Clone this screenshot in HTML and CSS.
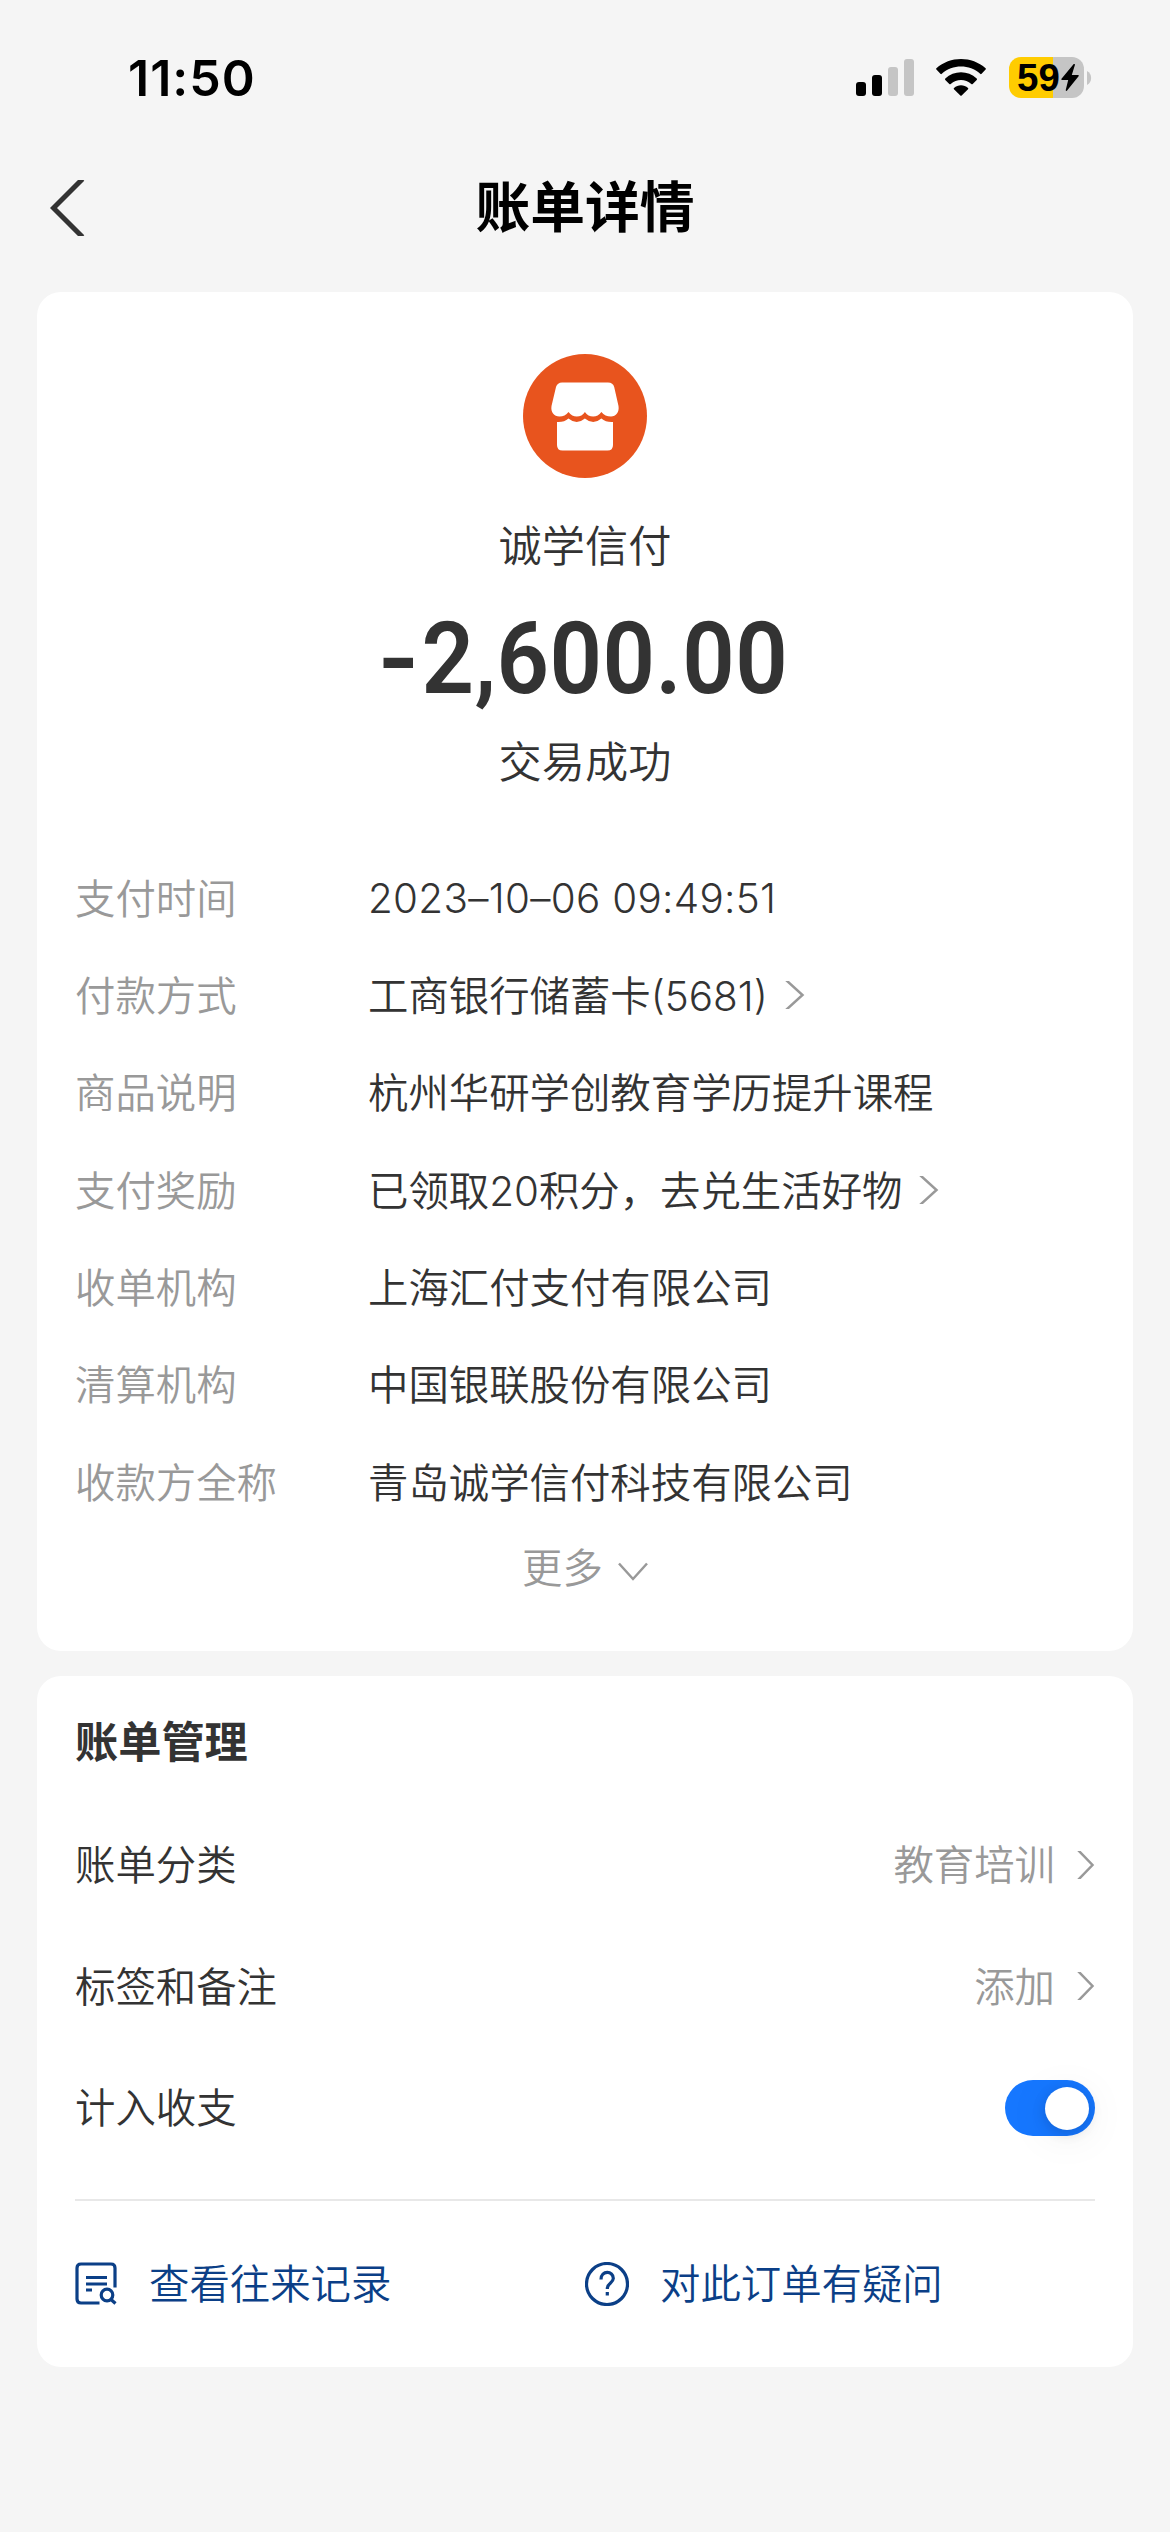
FILE: index.html
```html
<!DOCTYPE html>
<html lang="zh-CN">
<head>
    <meta charset="UTF-8">
    <meta name="viewport" content="width=device-width, initial-scale=1.0">
    <title>账单详情</title>
    <link rel="stylesheet" href="styles.css">
</head>
<body>
    <div class="status-bar">
        <div class="time">11:50</div>
        <div class="status-icons">
            <svg class="signal" width="58" height="37" viewBox="0 0 58 37">
                <rect x="0" y="23" width="10" height="14" rx="3" fill="#000"/>
                <rect x="16" y="16" width="10" height="21" rx="3" fill="#000"/>
                <rect x="32" y="8" width="10" height="29" rx="3" fill="#c5c5c5"/>
                <rect x="48" y="0" width="10" height="37" rx="3" fill="#c5c5c5"/>
            </svg>
            <svg class="wifi" width="50" height="37" viewBox="0 0 50 37">
                <path d="M0.4 10.6a1 1 0 0 1 0-1.3C14-3.1 36-3.1 49.6 9.300a1 1 0 0 1 0 1.300l-4 4.200a1 1 0 0 1-1.400 0C33.500 5.100 16.500 5.100 5.800 14.800a1 1 0 0 1-1.400 0z"/>
                <path d="M9.300 19.500C18 11 32 11 40.700 19.500a1 1 0 0 1 0 1.400l-4 4a1 1 0 0 1-1.400 0C29.500 19.700 20.500 19.700 14.700 24.900a1 1 0 0 1-1.400 0l-4-4a1 1 0 0 1 0-1.400z"/>
                <path d="M18 29c4-3.600 10-3.600 14 0a1 1 0 0 1 0 1.300l-6.300 6.200a1 1 0 0 1-1.400 0L18 30.300a1 1 0 0 1 0-1.300z"/>
            </svg>
            <div class="battery">
                <span class="battery-level">59</span>
                <svg class="bolt" width="18" height="27" viewBox="0 0 18 27">
                    <path d="M12.500 0.300L0.500 14.700c-.5.700-.2 1.300.6 1.300H7.200L4.800 25.800c-.3 1 .7 1.500 1.300.7L17.600 12.200c.5-.7.200-1.300-.6-1.300H10.800L13.900 1c.3-1-.8-1.400-1.400-.7z"/>
                </svg>
            </div>
            <svg class="battery-tip" width="5" height="14" viewBox="0 0 5 14">
                <path d="M0 0C5.500 2.500 5.500 11.500 0 14z" fill="#c5c5c5"/>
            </svg>
        </div>
    </div>

    <div class="nav-bar">
        <svg class="back" width="36" height="56" viewBox="0 0 36 56">
            <path d="M32.500 -1L3.500 28L32.500 57"/>
        </svg>
        <h1>账单详情</h1>
    </div>

    <div class="card bill">
        <svg class="shop-logo" width="124" height="124" viewBox="0 0 124 124">
            <circle cx="62" cy="62" r="62" fill="#e8541e"/>
            <path fill="#fff" d="M39 28.500H85Q90 28.500 91.200 33L95.500 52C96.500 58 93 62.500 88 62.500Q82 62.500 78.400 58Q75 62.500 70.200 62.500Q65 62.500 61.900 58Q59 62.500 53.700 62.500Q49 62.500 45.500 58Q42 62.500 36.500 62.500C31 62.500 27.500 58 28.500 52L33 33Q34.500 28.500 39 28.500Z"/>
            <path fill="#fff" d="M34 68Q41 68.500 45.500 64.500Q53.700 71.500 61.900 64.500Q70.200 71.500 78.400 64.500Q83 68.500 90 68V91Q90 96.500 84.500 96.500H39.500Q34 96.500 34 91Z"/>
        </svg>
        <div class="merchant">诚学信付</div>
        <div class="amount"><span class="minus">-</span>2,600.00</div>
        <div class="result">交易成功</div>

        <div class="details">
            <div class="row">
                <span class="label">支付时间</span>
                <span class="value date">2023–10–06 09:49:51</span>
            </div>
            <div class="row">
                <span class="label">付款方式</span>
                <span class="value">工商银行储蓄卡(5681)</span>
                <svg class="arrow" width="20" height="28" viewBox="0 0 20 28"><path d="M1 -1L17.500 14L1 29"/></svg>
            </div>
            <div class="row">
                <span class="label">商品说明</span>
                <span class="value">杭州华研学创教育学历提升课程</span>
            </div>
            <div class="row">
                <span class="label">支付奖励</span>
                <span class="value">已领取20积分，去兑生活好物</span>
                <svg class="arrow" width="20" height="28" viewBox="0 0 20 28"><path d="M1 -1L17.500 14L1 29"/></svg>
            </div>
            <div class="row">
                <span class="label">收单机构</span>
                <span class="value">上海汇付支付有限公司</span>
            </div>
            <div class="row">
                <span class="label">清算机构</span>
                <span class="value">中国银联股份有限公司</span>
            </div>
            <div class="row">
                <span class="label">收款方全称</span>
                <span class="value">青岛诚学信付科技有限公司</span>
            </div>
        </div>

        <div class="more">
            <span>更多</span>
            <svg width="30" height="20" viewBox="0 0 30 20"><path d="M1 1.500L15 17L29 1.500"/></svg>
        </div>
    </div>

    <div class="card manage">
        <h2>账单管理</h2>
        <div class="item">
            <span>账单分类</span>
            <span class="extra">教育培训</span>
            <svg class="arrow" width="18" height="28" viewBox="0 0 18 28"><path d="M1 -1L15.500 14L1 29"/></svg>
        </div>
        <div class="item">
            <span>标签和备注</span>
            <span class="extra">添加</span>
            <svg class="arrow" width="18" height="28" viewBox="0 0 18 28"><path d="M1 -1L15.500 14L1 29"/></svg>
        </div>
        <div class="item">
            <span>计入收支</span>
            <div class="switch"><div class="knob"></div></div>
        </div>
        <div class="links">
            <div class="link">
                <svg width="43" height="43" viewBox="0 0 43 43">
                    <path d="M24.500 41H6Q2 41 2 37V6Q2 2 6 2H36Q40 2 40 6V25.500"/>
                    <path d="M11 15.500H32M11 22H32M11 28H17"/>
                    <circle cx="32" cy="33" r="5.800"/>
                    <path d="M36 37.500L40.500 41.500"/>
                </svg>
                <span>查看往来记录</span>
            </div>
            <div class="link">
                <svg width="44" height="44" viewBox="0 0 44 44">
                    <circle cx="22" cy="22" r="20.500"/>
                    <path d="M16 17.500C16 8 28.500 8.500 28.300 16.500C28 21.500 22.300 20.500 22.300 27"/>
                    <path d="M22.300 30V33.500"/>
                </svg>
                <span>对此订单有疑问</span>
            </div>
        </div>
    </div>
</body>
</html>
```
FILE: styles.css
```css
* {
    box-sizing: border-box;
}
body {
    margin: 0;
    height: 2532px;
    background-color: #f5f5f5;
    color: #333;
    font-family: Inter, "Noto Sans CJK SC", sans-serif;
    font-size: 40.4px;
    font-weight: 350;
}
svg {
    display: block;
    flex: none;
}
.status-bar {
    display: flex;
    justify-content: space-between;
    align-items: center;
    height: 155px;
    padding: 0 78px 0 128px;
    color: #000;
}
.time {
    font-size: 50px;
    font-weight: 600;
    letter-spacing: 1px;
}
.status-icons {
    display: flex;
    align-items: center;
}
.wifi {
    margin-left: 22px;
}
.battery {
    display: flex;
    align-items: center;
    width: 75px;
    height: 41px;
    margin-left: 23px;
    padding-left: 8px;
    border-radius: 12px;
    background: linear-gradient(to right, #ffcc00 44px, #c5c5c5 44px);
}
.battery-level {
    width: 44px;
    font-family: "Liberation Sans", sans-serif;
    font-size: 38.5px;
    font-weight: 700;
}
.battery-tip {
    margin-left: 3px;
}
.nav-bar {
    display: grid;
    grid-template-columns: 120px 1fr 120px;
    align-items: center;
    height: 105px;
    margin-bottom: 32px;
}
.back {
    margin-left: 50px;
    fill: none;
    stroke: #333;
    stroke-width: 5;
}
h1 {
    margin: 0;
    padding-bottom: 9px;
    text-align: center;
    color: #000;
    font-size: 54.8px;
    font-weight: 700;
}
.card {
    margin: 0 37px 25px;
    padding: 0 38px;
    border-radius: 24px;
    background-color: #fff;
}
.bill {
    height: 1359px;
    padding-top: 62px;
}
.shop-logo {
    margin: 0 auto;
}
.merchant,
.result {
    height: 60px;
    line-height: 60px;
    text-align: center;
    font-size: 43.2px;
}
.merchant {
    margin-top: 38px;
}
.amount {
    height: 100px;
    margin: 33px 0 23px;
    line-height: 100px;
    text-align: center;
    font-family: Roboto, sans-serif;
    font-size: 100px;
    font-weight: 600;
    letter-spacing: 0.5px;
    transform: scaleX(0.92);
}
.minus {
    display: inline-block;
    margin-right: 6px;
    transform: scaleX(1.2);
}
.details {
    margin-top: 57px;
}
.row {
    display: flex;
    align-items: center;
    height: 97.35px;
}
.label,
.value {
    padding-bottom: 3px;
}
.label {
    width: 293px;
    color: #999;
}
.date {
    padding: 2px 0 0;
    letter-spacing: 0.3px;
}
.arrow {
    fill: none;
    stroke: #999;
    stroke-width: 2.5;
}
.row .arrow {
    margin-left: 17px;
}
.more {
    display: flex;
    justify-content: center;
    align-items: center;
    gap: 15px;
    height: 72px;
    color: #999;
}
.more span {
    padding-bottom: 2px;
}
.more svg {
    margin-top: 12px;
    fill: none;
    stroke: #999;
    stroke-width: 2.5;
}
.manage {
    height: 691px;
}
h2 {
    height: 128px;
    margin: 0;
    line-height: 133px;
    font-size: 43.2px;
    font-weight: 700;
}
.item {
    display: flex;
    align-items: center;
    height: 121.5px;
}
.item span {
    padding-bottom: 4px;
}
.extra {
    margin-left: auto;
    color: #999;
}
.item .arrow {
    margin-left: 22px;
}
.switch {
    width: 90px;
    height: 56px;
    margin-left: auto;
    padding: 7px 6px 6px 40px;
    border-radius: 28px;
    background-color: #1677ff;
}
.knob {
    width: 44px;
    height: 43px;
    border-radius: 50%;
    background-color: #fff;
    box-shadow: 0 6px 44px rgba(0, 0, 0, 0.08), 0 3px 14px rgba(0, 0, 0, 0.14);
}
.links {
    display: grid;
    grid-template-columns: 1fr 1fr;
    height: 168px;
    margin-top: 30px;
    border-top: 2px solid #e8e8e8;
}
.link {
    display: flex;
    align-items: center;
    gap: 31px;
    color: #0b3f87;
}
.link span {
    padding-bottom: 5px;
}
.link svg {
    fill: none;
    stroke: #0b3f87;
    stroke-width: 3.2;
}
```
